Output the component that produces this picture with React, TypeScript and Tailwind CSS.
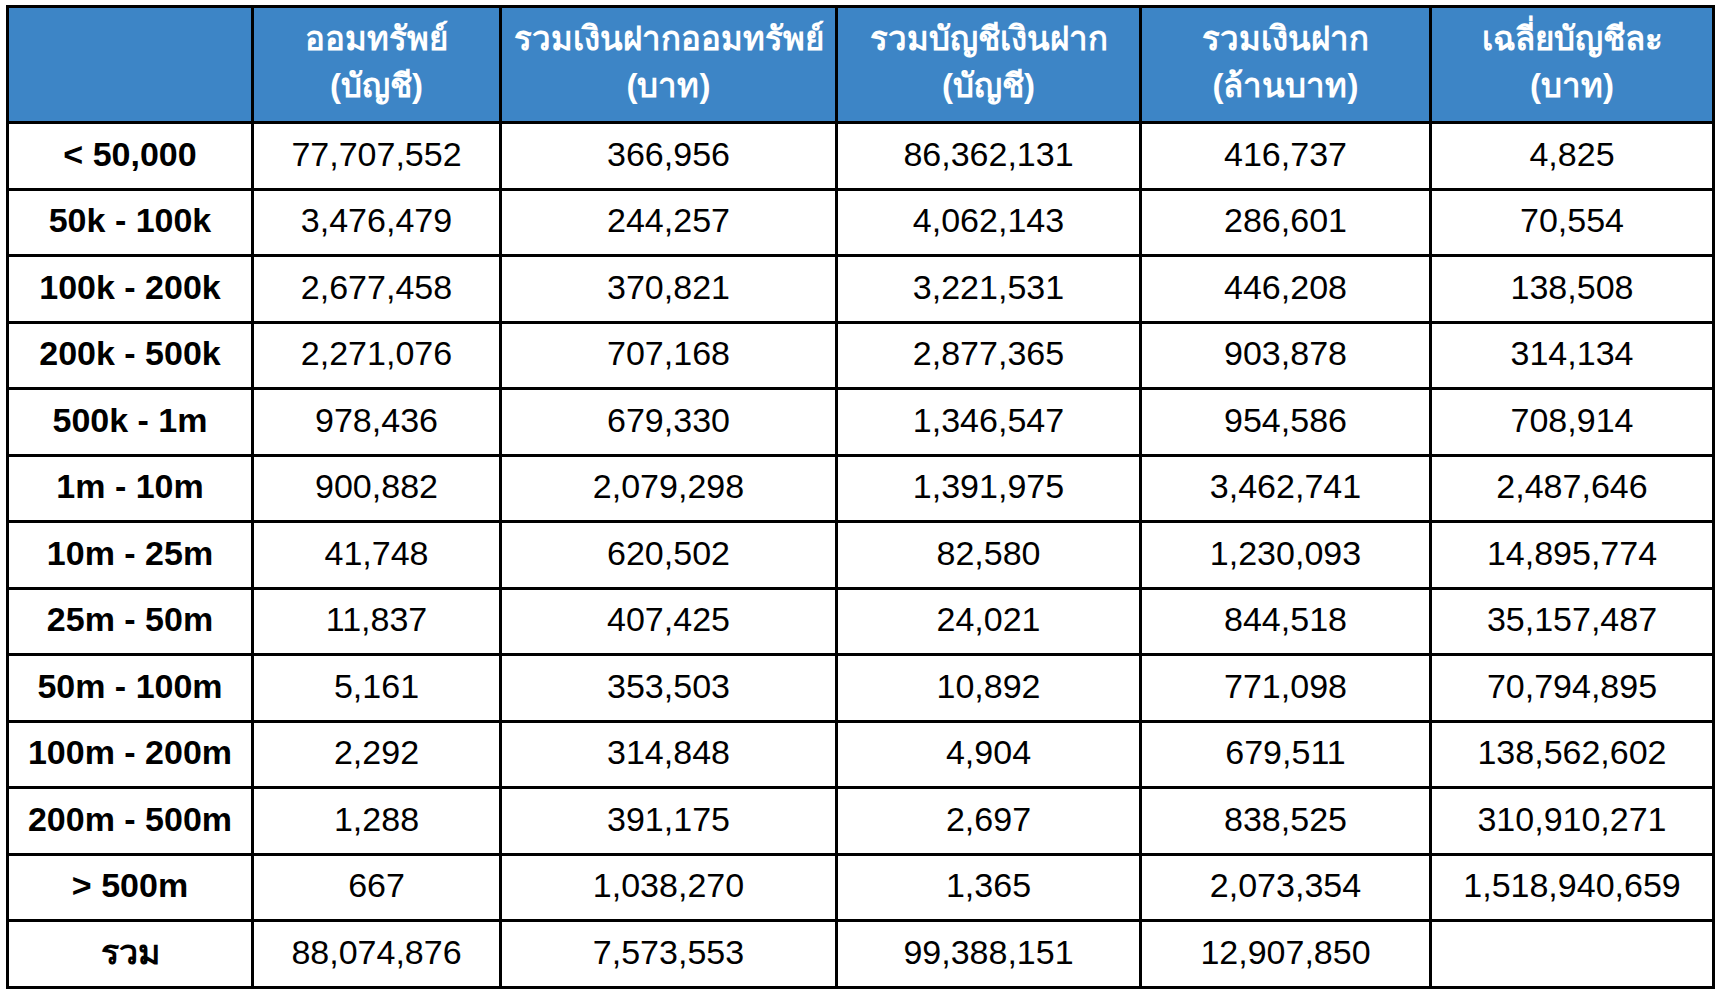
import React from 'react';

const headers = [
  ['', ''],
  ['ออมทรัพย์', '(บัญชี)'],
  ['รวมเงินฝากออมทรัพย์', '(บาท)'],
  ['รวมบัญชีเงินฝาก', '(บัญชี)'],
  ['รวมเงินฝาก', '(ล้านบาท)'],
  ['เฉลี่ยบัญชีละ', '(บาท)'],
];

const rows = [
  ['< 50,000', '77,707,552', '366,956', '86,362,131', '416,737', '4,825'],
  ['50k - 100k', '3,476,479', '244,257', '4,062,143', '286,601', '70,554'],
  ['100k - 200k', '2,677,458', '370,821', '3,221,531', '446,208', '138,508'],
  ['200k - 500k', '2,271,076', '707,168', '2,877,365', '903,878', '314,134'],
  ['500k - 1m', '978,436', '679,330', '1,346,547', '954,586', '708,914'],
  ['1m - 10m', '900,882', '2,079,298', '1,391,975', '3,462,741', '2,487,646'],
  ['10m - 25m', '41,748', '620,502', '82,580', '1,230,093', '14,895,774'],
  ['25m - 50m', '11,837', '407,425', '24,021', '844,518', '35,157,487'],
  ['50m - 100m', '5,161', '353,503', '10,892', '771,098', '70,794,895'],
  ['100m - 200m', '2,292', '314,848', '4,904', '679,511', '138,562,602'],
  ['200m - 500m', '1,288', '391,175', '2,697', '838,525', '310,910,271'],
  ['> 500m', '667', '1,038,270', '1,365', '2,073,354', '1,518,940,659'],
  ['รวม', '88,074,876', '7,573,553', '99,388,151', '12,907,850', ''],
];

const widths = ['w-[245px]', 'w-[248px]', 'w-[336px]', 'w-[304px]', 'w-[290px]', 'w-[283px]'];

export default function App() {
  return (
    <div className="w-[1722px] h-[996px] bg-white pl-[6px] pt-[5px] font-['Liberation_Sans','Noto_Sans',sans-serif]">
      <table className="table-fixed border-collapse border-[3px] border-black w-[1709px] text-black text-[34px] leading-none">
        <colgroup>
          {widths.map((w, i) => (
            <col key={i} className={w} />
          ))}
        </colgroup>
        <thead>
          <tr className="h-[116px] bg-[#3d85c6]">
            {headers.map((h, i) => (
              <th
                key={i}
                className="border-[3px] border-black text-white font-bold text-[33px] leading-[47px] text-center align-middle pb-[5px] px-0 whitespace-nowrap"
              >
                {h[0]}
                {h[0] && <br />}
                {h[1]}
              </th>
            ))}
          </tr>
        </thead>
        <tbody>
          {rows.map((r) => (
            <tr key={r[0]} className="h-[66.5px]">
              {r.map((c, i) => (
                <td
                  key={i}
                  className={`border-[3px] border-black text-center align-middle pb-[4px] ${
                    i === 0 ? 'font-bold' : 'font-normal'
                  }`}
                >
                  {c}
                </td>
              ))}
            </tr>
          ))}
        </tbody>
      </table>
    </div>
  );
}
